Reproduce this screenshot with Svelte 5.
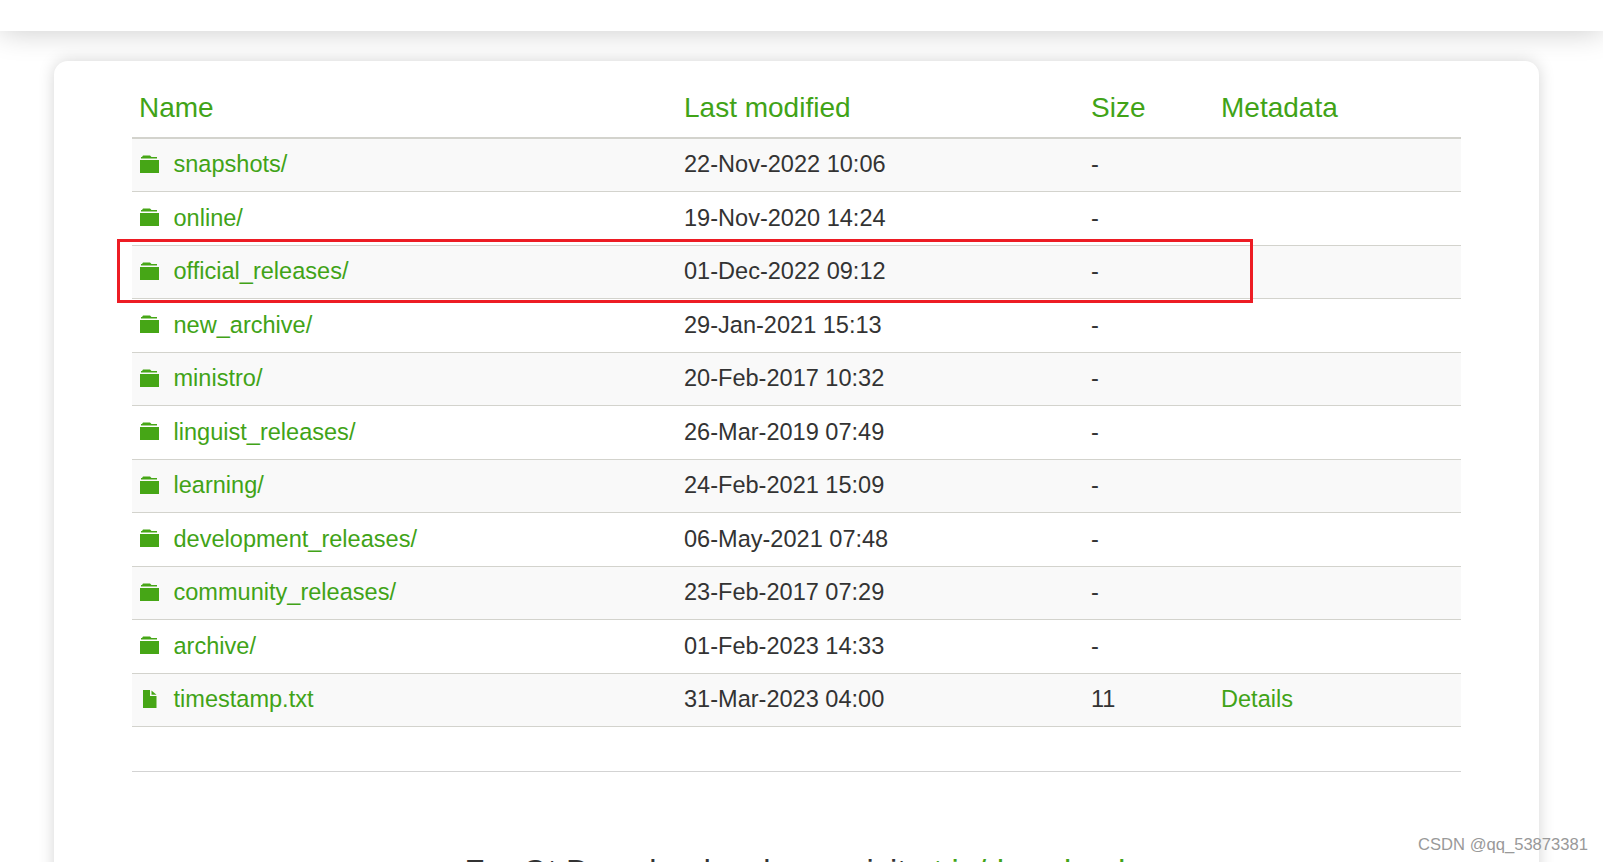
<script>
  const rows = [
    { name: "snapshots/", date: "22-Nov-2022 10:06", size: "-" },
    { name: "online/", date: "19-Nov-2020 14:24", size: "-" },
    { name: "official_releases/", date: "01-Dec-2022 09:12", size: "-", marked: true },
    { name: "new_archive/", date: "29-Jan-2021 15:13", size: "-" },
    { name: "ministro/", date: "20-Feb-2017 10:32", size: "-" },
    { name: "linguist_releases/", date: "26-Mar-2019 07:49", size: "-" },
    { name: "learning/", date: "24-Feb-2021 15:09", size: "-" },
    { name: "development_releases/", date: "06-May-2021 07:48", size: "-" },
    { name: "community_releases/", date: "23-Feb-2017 07:29", size: "-" },
    { name: "archive/", date: "01-Feb-2023 14:33", size: "-" },
    { name: "timestamp.txt", date: "31-Mar-2023 04:00", size: "11", file: true, meta: "Details" },
  ];
</script>

<header class="topbar"></header>

<main class="page">
  <section class="card">
    <div class="listing">
      <div class="row head">
        <div class="name">Name</div>
        <div>Last modified</div>
        <div>Size</div>
        <div>Metadata</div>
      </div>
      {#each rows as r}
        <div class="row item">
          <div class="name">
            {#if r.file}
              <svg class="icon" viewBox="0 0 19 18" aria-hidden="true">
                <path d="M3 0H10V6H16.5V18H3Z" fill="#46a616" />
                <path d="M11.5 0.5L16.5 4.8H11.5Z" fill="#46a616" />
              </svg>
            {:else}
              <svg class="icon" viewBox="0 0 19 18" aria-hidden="true">
                <path d="M3 0.5H10L11.5 2H17V3.5H1V2H2Z" fill="#46a616" />
                <path d="M0 5H19V18H0Z" fill="#46a616" />
              </svg>
            {/if}
            <a href="#top">{r.name}</a>
          </div>
          <div>{r.date}</div>
          <div>{r.size}</div>
          <div>{#if r.meta}<a href="#top">{r.meta}</a>{/if}</div>
          {#if r.marked}<span class="mark"></span>{/if}
        </div>
      {/each}
    </div>
    <hr />
    <p class="note">For Qt Downloads, please visit <a href="#top">qt.io/download</a></p>
  </section>
</main>

<span class="watermark">CSDN @qq_53873381</span>

<style>
  :global(html),
  :global(body) {
    height: 862px;
    margin: 0;
    overflow: hidden;
    background: #fff;
  }

  .topbar {
    height: 31px;
    background: #fff;
    box-shadow: 0 0 30px rgba(0, 0, 0, 0.22);
    position: relative;
    z-index: 1;
  }

  .page {
    padding: 30px 64px 0 54px;
    font-family: "Liberation Sans", Arial, sans-serif;
    color: #333;
  }

  .card {
    background: #fff;
    border-radius: 14px;
    box-shadow: 0 0 16px rgba(0, 0, 0, 0.17);
    padding: 0 78px 40px;
    height: 900px;
  }

  .listing {
    display: grid;
    grid-template-columns: 544px 407px 130px 1fr;
  }

  .row {
    display: grid;
    grid-template-columns: subgrid;
    grid-column: 1 / -1;
    position: relative;
  }

  .row > div {
    padding-left: 8px;
    display: flex;
    align-items: center;
  }

  .head {
    height: 77.5px;
    font-size: 28px;
    color: #41a317;
    border-bottom: 2px solid #d3d3cd;
    box-sizing: border-box;
    padding-top: 19px;
  }

  .head .name {
    margin-left: -1px;
  }

  .item {
    height: 53.5px;
    box-sizing: border-box;
    font-size: 23.55px;
    border-bottom: 1.5px solid #d3d3cd;
  }

  .item:nth-child(even) {
    background: #f9f9f9;
  }

  .icon {
    width: 19px;
    height: 18px;
    margin-right: 14.5px;
    margin-bottom: 2px;
    flex: none;
  }

  a {
    color: #41a317;
    text-decoration: none;
  }

  .mark {
    position: absolute;
    left: -15px;
    top: -6.5px;
    width: 1136px;
    height: 63.5px;
    box-sizing: border-box;
    border: 3px solid #ed1c24;
    z-index: 2;
  }

  hr {
    border: 0;
    border-top: 1px solid #d3d3d3;
    margin: 43.5px 0 0;
  }

  .note {
    margin: 81px 0 0 -3px;
    font-size: 32.6px;
    text-align: center;
  }

  .watermark {
    position: absolute;
    left: 1418px;
    top: 835px;
    font-family: "Liberation Sans", Arial, sans-serif;
    font-size: 16.6px;
    color: #999;
    z-index: 3;
  }
</style>
